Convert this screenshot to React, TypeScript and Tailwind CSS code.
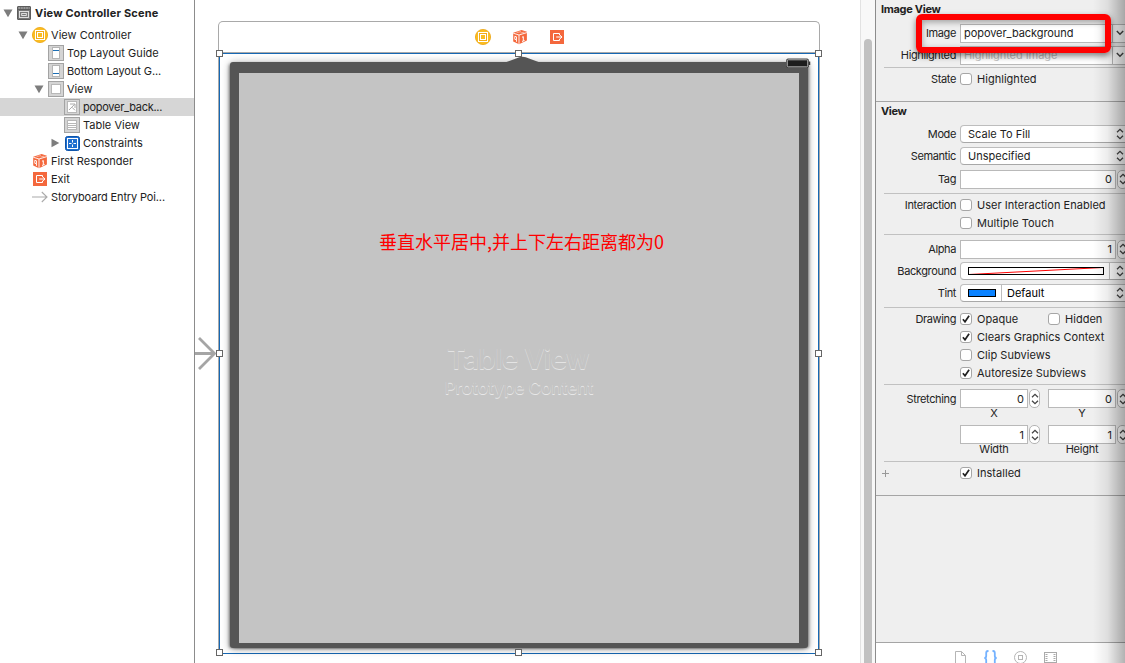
import React from "react";

const GoldIcon = ({ size = 16 }: { size?: number }) => (
  <svg width={size} height={size} viewBox="0 0 16 16" className="shrink-0">
    <circle cx="8" cy="8" r="7.6" fill="#fbbd22" stroke="#eba512" strokeWidth="0.8" />
    <rect x="3.500" y="3.500" width="9" height="9" fill="#f3ac18" stroke="#fff" strokeWidth="1" />
    <rect x="5.500" y="5.500" width="5" height="5" fill="#fbbd22" stroke="#fff" strokeWidth="1" />
  </svg>
);

const CubeIcon = () => (
  <svg width="16" height="16" viewBox="0 0 16 16" className="shrink-0">
    <path d="M1.2 3.8 9.6 1l5.3 1.7v8.9L7 15.2l-5.8-2.6z" fill="#f4683d" />
    <path d="M1.2 4.2 7 6l7.9-2.4M7 6v9" fill="none" stroke="#fff" strokeWidth="0.9" />
    <path d="M4.6 3.6 9 2.6M8.6 4l3.8-.9" fill="none" stroke="#fbd0c2" strokeWidth="0.7" />
    <path d="M2.8 7.3l1.7.5v3l-1.7-.5zM4.5 10.800v2" fill="none" stroke="#fff" strokeWidth="0.9" />
    <path d="M10 8.300l1.300-.7v4.200M10 12.500l2.600-1.100" fill="none" stroke="#fff" strokeWidth="1" />
  </svg>
);

const ExitIcon = () => (
  <svg width="14" height="14" viewBox="0 0 14 14" className="shrink-0">
    <rect width="14" height="14" fill="#f4683d" />
    <path d="M9.500 5.200V3.500h-6v7h6V8.800" fill="none" stroke="#fff" strokeWidth="1" />
    <path d="M6.200 7h5.600M10 5.200 12 7l-2 1.800" fill="none" stroke="#fff" strokeWidth="1" />
  </svg>
);

const Framed = ({ children }: { children: React.ReactNode }) => (
  <svg width="16" height="16" viewBox="0 0 16 16" className="shrink-0">
    <rect x="0.500" y="0.500" width="15" height="15" fill="#d4d4d4" stroke="#a3a3a3" />
    {children}
  </svg>
);

const SceneIcon = () => (
  <svg width="14" height="14" viewBox="0 0 14 14" className="shrink-0">
    <rect x="0.500" y="0.500" width="13" height="13" rx="0.500" fill="#777" stroke="#5c5c5c" />
    <path d="M1.500 2h11" stroke="#bbb" strokeWidth="1.200" strokeDasharray="1.500 1.100" />
    <path d="M0.500 3.500h13" stroke="#5c5c5c" />
    <rect x="2.500" y="5.500" width="9" height="6" fill="#777" stroke="#e8e8e8" strokeWidth="0.900" />
    <rect x="4.700" y="7.500" width="4.600" height="2" fill="none" stroke="#e8e8e8" strokeWidth="0.900" />
  </svg>
);

const TopGuideIcon = () => (
  <Framed>
    <rect x="4.500" y="2.500" width="7" height="11" fill="#fff" stroke="#b5b5b5" />
    <path d="M5 5.500h6" stroke="#1c6fb5" />
  </Framed>
);
const BottomGuideIcon = () => (
  <Framed>
    <rect x="4.500" y="2.500" width="7" height="11" fill="#fff" stroke="#b5b5b5" />
    <path d="M5 10.500h6" stroke="#1c6fb5" />
  </Framed>
);
const ViewIcon = () => (
  <Framed>
    <rect x="3.500" y="3.500" width="9" height="9" fill="#fff" stroke="#b8b8b8" />
  </Framed>
);
const ImageIcon = () => (
  <Framed>
    <rect x="3.500" y="2.500" width="9" height="11" fill="#fff" stroke="#b8b8b8" />
    <path d="M6 5h5v4M10.600 5.300 5 11M8 8.300l3 3" fill="none" stroke="#aaa" strokeWidth="1" />
  </Framed>
);
const TableIcon = () => (
  <Framed>
    <rect x="3.500" y="3.500" width="9" height="9" fill="#fff" stroke="#b8b8b8" />
    <path d="M4 6.500h8M4 8.500h8M4 10.500h8" stroke="#b8b8b8" />
  </Framed>
);
const ConstraintsIcon = () => (
  <svg width="15" height="15" viewBox="0 0 15 15" className="shrink-0">
    <rect x="0.500" y="0.500" width="14" height="14" rx="2" fill="#1f6fd0" stroke="#0f55aa" />
    <rect x="2.500" y="2.500" width="10" height="10" fill="none" stroke="#fff" />
    <path d="M7.500 4v2.500M7.500 8.500V11M4 7.500h2.500M8.500 7.500H11" stroke="#fff" strokeWidth="1" />
  </svg>
);
const EntryIcon = () => (
  <svg width="16" height="12" viewBox="0 0 16 12" className="shrink-0">
    <path d="M0 6h15M9.800 1l5.200 5-5.200 5" fill="none" stroke="#aaa" strokeWidth="1.100" />
  </svg>
);

const Triangle = ({ open }: { open: boolean }) => (
  <svg width="10" height="10" viewBox="0 0 10 10" className="shrink-0">
    <path d={open ? "M0.500 1.500h9L5 9.300z" : "M1.500 0.800 9.300 5 1.500 9.200z"} fill="#7d7d7d" />
  </svg>
);

type TreeItem = {
  pad: string;
  open?: boolean;
  icon: React.ReactNode;
  text: string;
  track?: string;
  selected?: boolean;
};

const tree: TreeItem[] = [
  { pad: "pl-[18px]", open: true, icon: <GoldIcon />, text: "View Controller", track: "tracking-[0.04px]" },
  { pad: "pl-[34px]", icon: <TopGuideIcon />, text: "Top Layout Guide", track: "tracking-[0.04px]" },
  { pad: "pl-[34px]", icon: <BottomGuideIcon />, text: "Bottom Layout G...", track: "tracking-[-0.08px]" },
  { pad: "pl-[34px]", open: true, icon: <ViewIcon />, text: "View" },
  { pad: "pl-[50px]", icon: <ImageIcon />, text: "popover_back...", track: "tracking-[-0.27px]", selected: true },
  { pad: "pl-[50px]", icon: <TableIcon />, text: "Table View" },
  { pad: "pl-[50px]", open: false, icon: <ConstraintsIcon />, text: "Constraints", track: "tracking-[0.05px]" },
  { pad: "pl-[18px]", icon: <CubeIcon />, text: "First Responder" },
  { pad: "pl-[18px]", icon: <ExitIcon />, text: "Exit" },
  { pad: "pl-[18px]", icon: <EntryIcon />, text: "Storyboard Entry Poi...", track: "tracking-[-0.14px]" },
];

const Outline = () => (
  <aside className="flex w-[195px] shrink-0 flex-col border-r border-[#8c8c8c] bg-white pt-1">
    <div className="mb-1 flex h-[18px] items-center pl-[3px] font-bold">
      <Triangle open />
      <span className="ml-1 mr-1 flex">
        <SceneIcon />
      </span>
      <span className="tracking-[0.19px]">View Controller Scene</span>
    </div>
    {tree.map((t) => (
      <div
        key={t.text}
        className={`flex h-[18px] items-center ${t.pad} ${t.selected ? "bg-[#d6d6d6]" : ""}`}
      >
        <span className="flex w-[14px] shrink-0">
          {t.open !== undefined && <Triangle open={t.open} />}
        </span>
        <span className="mr-[3px] flex w-4 shrink-0 justify-center">{t.icon}</span>
        <span className={t.track}>{t.text}</span>
      </div>
    ))}
  </aside>
);

const handles = [
  "left-[-4px] top-[-4px]",
  "left-[295px] top-[-4px]",
  "right-[-4px] top-[-4px]",
  "left-[-4px] top-[296px]",
  "right-[-4px] top-[296px]",
  "left-[-4px] bottom-[-3px]",
  "left-[295px] bottom-[-3px]",
  "right-[-4px] bottom-[-3px]",
];

const Canvas = () => (
  <main className="relative w-[665px] shrink-0 overflow-hidden bg-white pl-[23px] pt-[21px]">
    <div className="flex h-[31px] w-[602px] items-center justify-center gap-[21px] rounded-t-[5px] border border-b-0 border-[#a9a9a9] pl-px">
      <GoldIcon />
      <CubeIcon />
      <span className="ml-px flex">
        <ExitIcon />
      </span>
    </div>
    <div className="w-[602px] border-x border-t border-[#a9a9a9]">
      <div className="relative h-[601px] w-[600px] border border-[#1668b4] pl-[10px] pt-2">
        <div className="flex h-[586px] w-[578px] flex-col items-center rounded-[3px] border-x-[9px] border-b-[5px] border-t-[11px] border-x-[#555] border-b-[#555] border-t-[#555] bg-[#c4c4c4] shadow-[-2px_1px_3px_-1px_rgba(0,0,0,0.45),2px_1px_3px_-1px_rgba(0,0,0,0.45),0_1px_8px_0_rgba(0,0,0,0.35)]">
          <p className="mr-[-5px] mt-[155px] h-[26px] whitespace-nowrap font-['Noto_Sans_CJK_SC',sans-serif] text-[18px] leading-[26px] text-[#ff0000]">
            垂直水平居中,并上下左右距离都为0
          </p>
          <p className="mr-[2px] mt-[89px] h-[32px] whitespace-nowrap text-[28px] font-semibold leading-[32px] tracking-[-0.65px] text-[#c4c4c4] [text-shadow:0_1px_0_#e4e4e4]">
            Table View
          </p>
          <p className="mt-[2px] h-[22px] whitespace-nowrap text-[17px] font-semibold leading-[22px] tracking-[-0.12px] text-[#c4c4c4] [text-shadow:0_1px_0_#e8e8e8]">
            Prototype Content
          </p>
        </div>
        <svg className="absolute left-[283px] top-[2px]" width="40" height="8" viewBox="0 0 40 8">
          <path d="M0 7.200 13 2.500Q19.500 -1 26 2.500L39 7.200V8H0z" fill="#555" />
        </svg>
        <svg className="absolute left-[565px] top-[4px]" width="26" height="11" viewBox="0 0 26 11">
          <rect x="1.500" y="1" width="22" height="8.500" rx="1.500" fill="#222" stroke="#444" />
          <rect x="2.300" y="1.800" width="20.400" height="7" rx="1" fill="#1d1d1d" stroke="#d0d0d0" strokeWidth="0.8" />
          <path d="M24.500 3.500v3.500" stroke="#333" strokeWidth="1.500" />
        </svg>
        {handles.map((h) => (
          <span key={h} className={`absolute size-[7px] border border-[#666] bg-white ${h}`} />
        ))}
      </div>
    </div>
    <svg className="absolute left-0 top-[334px]" width="22" height="38" viewBox="0 0 22 38">
      <path d="M0 19.500h19M4 4l15.500 15.500L4 35" fill="none" stroke="#a5a5a5" strokeWidth="2.800" />
    </svg>
  </main>
);

const Check = ({ label, on }: { label: string; on?: boolean }) => (
  <span className="flex items-center gap-[5px]">
    <span className="flex size-3 items-center justify-center rounded-[3px] border border-[#a6a6a6] bg-white">
      {on && (
        <svg width="8" height="8" viewBox="0 0 8 8">
          <path d="M0.900 4.300 3 6.800 7.100 0.800" fill="none" stroke="#222" strokeWidth="1.700" />
        </svg>
      )}
    </span>
    <span className="tracking-[0.03px]">{label}</span>
  </span>
);

const Row = ({
  label,
  h = "h-[22px]",
  children,
}: {
  label?: string;
  h?: string;
  children: React.ReactNode;
}) => (
  <div className={`flex shrink-0 items-center ${h}`}>
    <span className="mr-1 w-[80px] shrink-0 text-right tracking-[-0.38px]">{label}</span>
    {children}
  </div>
);

const UpDown = () => (
  <svg width="8" height="12" viewBox="0 0 8 12" className="shrink-0">
    <path d="M1 4.200 4 1.300 7 4.200M1 7.800 4 10.700 7 7.800" fill="none" stroke="#444" strokeWidth="1.300" />
  </svg>
);

const Stepper = () => (
  <span className="ml-px flex h-[19px] w-[11px] shrink-0 items-center justify-center rounded-[5px] border border-[#b4b4b4] bg-white">
    <UpDown />
  </span>
);

const Num = ({ value, w }: { value: string; w: string }) => (
  <span className={`flex h-[19px] shrink-0 items-center justify-end border border-[#b9b9b9] bg-white pr-[3px] ${w}`}>
    {value}
  </span>
);

const Popup = ({ children }: { children: React.ReactNode }) => (
  <span className="flex h-[18px] w-[172px] shrink-0 items-center overflow-hidden rounded-[4px] border border-[#bdbdbd] border-b-[#a8a8a8] bg-white pl-[7px]">
    {children}
  </span>
);

const Combo = ({ text, faded }: { text: string; faded?: boolean }) => (
  <span className="flex h-[19px] w-[172px] shrink-0 items-center border border-[#b9b9b9] bg-white">
    <span className={`w-[151px] shrink-0 pl-[3px] tracking-[-0.06px] ${faded ? "text-[#bdbdbd]" : ""}`}>{text}</span>
    <span className="flex h-full items-center border-l border-[#b9b9b9] pl-[3px]">
      <svg width="8" height="6" viewBox="0 0 8 6">
        <path d="M0.800 1 4 4.200 7.200 1" fill="none" stroke="#444" strokeWidth="1.500" />
      </svg>
    </span>
  </span>
);

const Sep = ({ c }: { c: string }) => <div className={`h-px shrink-0 bg-[#c1c1c1] ${c}`} />;
const Edge = ({ c }: { c: string }) => <div className={`h-px shrink-0 bg-[#a5a5a5] ${c}`} />;

const Inspector = () => (
  <aside className="relative flex w-[250px] shrink-0 flex-col overflow-hidden border-l border-[#8c8c8c] bg-[#efefef]">
    <h2 className="mb-1 h-[18px] shrink-0 pl-[5px] font-bold leading-[18px] tracking-[-0.3px]">Image View</h2>
    <Row label="Image"><Combo text="popover_background" /></Row>
    <Row label="Highlighted"><Combo text="Highlighted Image" faded /></Row>
    <Sep c="ml-2 mt-px mb-[2px]" />
    <Row label="State" h="h-[18px]"><Check label="Highlighted" /></Row>
    <Edge c="mt-[13px]" />
    <h2 className="mb-[3px] h-[18px] shrink-0 pl-[5px] font-bold leading-[18px] tracking-[-0.4px]">View</h2>
    <Row label="Mode">
      <Popup><span className="w-[148px] shrink-0">Scale To Fill</span><UpDown /></Popup>
    </Row>
    <Row label="Semantic">
      <Popup><span className="w-[148px] shrink-0">Unspecified</span><UpDown /></Popup>
    </Row>
    <Row label="Tag" h="mt-px h-[22px]"><Num value="0" w="w-[156px]" /><Stepper /></Row>
    <Sep c="ml-2 mt-[3px] mb-[2px]" />
    <Row label="Interaction" h="h-[18px]"><Check label="User Interaction Enabled" /></Row>
    <Row h="h-[18px]"><Check label="Multiple Touch" /></Row>
    <Sep c="ml-2 mt-[2px] mb-[3px]" />
    <Row label="Alpha"><Num value="1" w="w-[156px]" /><Stepper /></Row>
    <Row label="Background">
      <Popup>
        <svg width="136" height="8" viewBox="0 0 136 8" className="shrink-0">
          <rect x="0.500" y="0.500" width="135" height="7" fill="#fff" />
          <path d="M1 7.500 135 0.500" stroke="#f00" />
          <rect x="0.500" y="0.500" width="135" height="7" fill="none" stroke="#000" />
        </svg>
        <span className="ml-[5px] mr-[6px] h-full w-px shrink-0 bg-[#bdbdbd]" />
        <UpDown />
      </Popup>
    </Row>
    <Row label="Tint">
      <Popup>
        <span className="h-2 w-7 shrink-0 border border-black bg-[#0a82ff]" />
        <span className="ml-[5px] h-full w-px shrink-0 bg-[#bdbdbd]" />
        <span className="w-[114px] shrink-0 pl-[5px] text-black">Default</span>
        <UpDown />
      </Popup>
    </Row>
    <Sep c="ml-2 mt-[3px] mb-[2px]" />
    <Row label="Drawing" h="h-[18px]">
      <span className="w-[88px] shrink-0"><Check label="Opaque" on /></span>
      <Check label="Hidden" />
    </Row>
    <Row h="h-[18px]"><Check label="Clears Graphics Context" on /></Row>
    <Row h="h-[18px]"><Check label="Clip Subviews" /></Row>
    <Row h="h-[18px]"><Check label="Autoresize Subviews" on /></Row>
    <Sep c="ml-2 mt-[2px] mb-[4px]" />
    <Row label="Stretching" h="h-[19px]">
      <Num value="0" w="w-[68px]" /><Stepper />
      <span className="w-2 shrink-0" />
      <Num value="0" w="w-[68px]" /><Stepper />
    </Row>
    <div className="mb-[7px] flex h-[10px] shrink-0 items-center pl-[84px] text-center">
      <span className="w-[68px]">X</span>
      <span className="ml-5 w-[68px]">Y</span>
    </div>
    <Row h="h-[19px]">
      <Num value="1" w="w-[68px]" /><Stepper />
      <span className="w-2 shrink-0" />
      <Num value="1" w="w-[68px]" /><Stepper />
    </Row>
    <div className="flex h-[10px] shrink-0 items-center pl-[84px] text-center tracking-[-0.25px]">
      <span className="w-[68px]">Width</span>
      <span className="ml-5 w-[68px]">Height</span>
    </div>
    <Sep c="ml-2 mt-[7px] mb-[2px]" />
    <div className="flex h-[18px] shrink-0 items-center pl-[6px]">
      <svg width="7" height="7" viewBox="0 0 7 7" className="mr-[71px]">
        <path d="M3.500 0v7M0 3.500h7" stroke="#999" />
      </svg>
      <Check label="Installed" on />
    </div>
    <Edge c="mt-[13px]" />
    <footer className="mt-auto flex h-[21px] shrink-0 gap-[16px] overflow-hidden border-t border-[#a5a5a5] bg-white pl-[77px] pt-[7px]">
      <svg width="14" height="16" viewBox="0 0 14 16" className="shrink-0">
        <path d="M2.500 1.500h6l4 4v10h-10zM8.500 1.500v4h4" fill="none" stroke="#b5b5b5" />
      </svg>
      <svg width="14" height="16" viewBox="0 0 14 16" className="shrink-0">
        <path
          d="M5.500 1H5Q3.200 1 3.200 3v3Q3.200 8 1.300 8 3.200 8 3.200 10v3Q3.200 15 5 15h.5M9.500 1h.5Q11.800 1 11.800 3v3q0 2 1.900 2-1.900 0-1.900 2v3q0 2-1.800 2h-.5"
          fill="none" stroke="#74b2ff" strokeWidth="1.800"
        />
      </svg>
      <svg width="14" height="16" viewBox="0 0 14 16" className="shrink-0">
        <circle cx="7.500" cy="7.500" r="6" fill="none" stroke="#b5b5b5" />
        <rect x="5.500" y="5.500" width="4" height="4" fill="none" stroke="#b5b5b5" />
      </svg>
      <svg width="14" height="16" viewBox="0 0 14 16" className="shrink-0">
        <rect x="1.500" y="2.500" width="12" height="10" fill="#fff" stroke="#aaa" />
        <path d="M3.500 4v8M11.500 4v8" stroke="#aaa" strokeWidth="2" strokeDasharray="1 1" />
      </svg>
    </footer>
    <div className="absolute inset-y-0 right-0 w-8 bg-[linear-gradient(to_right,rgba(0,0,0,0),rgba(0,0,0,0.07)_45%,rgba(0,0,0,0.3))]" />
    <div className="absolute left-[40px] top-[14px] h-[39px] w-[195px] rounded-[6px] border-[6px] border-[#ff0000] shadow-[0_3px_6px_rgba(0,0,0,0.5),inset_0_2px_6px_rgba(0,0,0,0.35)]" />
  </aside>
);

export default function App() {
  return (
    <div className="flex h-[663px] w-[1125px] overflow-hidden whitespace-nowrap bg-white font-['Inter','Liberation_Sans',sans-serif] text-[11px] leading-[14px] text-[#222]">
      <Outline />
      <Canvas />
      <div className="flex w-[15px] shrink-0 items-end border-l border-[#e2e2e2] bg-[#f8f8f8] pl-[3px]">
        <div className="h-[624px] w-2 rounded-t-full bg-[#c1c1c1]" />
      </div>
      <Inspector />
    </div>
  );
}
